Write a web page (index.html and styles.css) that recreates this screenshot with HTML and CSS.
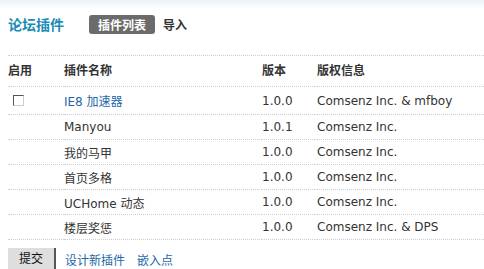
FILE: index.html
```html
<!DOCTYPE html>
<html>
<head>
<meta charset="utf-8">
<link rel="stylesheet" href="styles.css">
</head>
<body>
<div class="topbar"></div>
<div class="page">
  <div class="head">
    <h3 class="title">论坛插件</h3>
    <span class="tab active">插件列表</span>
    <span class="tab">导入</span>
  </div>
  <table class="grid">
    <thead>
      <tr><th class="c1">启用</th><th class="c2">插件名称</th><th class="c3">版本</th><th class="c4">版权信息</th></tr>
    </thead>
    <tbody>
      <tr class="first"><td class="c1"><span class="chk"></span></td><td class="c2"><a class="link">IE8 加速器</a></td><td class="c3">1.0.0</td><td class="c4">Comsenz Inc. &amp; mfboy</td></tr>
      <tr><td class="c1"></td><td class="c2">Manyou</td><td class="c3">1.0.1</td><td class="c4">Comsenz Inc.</td></tr>
      <tr><td class="c1"></td><td class="c2">我的马甲</td><td class="c3">1.0.0</td><td class="c4">Comsenz Inc.</td></tr>
      <tr><td class="c1"></td><td class="c2">首页多格</td><td class="c3">1.0.0</td><td class="c4">Comsenz Inc.</td></tr>
      <tr><td class="c1"></td><td class="c2">UCHome 动态</td><td class="c3">1.0.0</td><td class="c4">Comsenz Inc.</td></tr>
      <tr><td class="c1"></td><td class="c2">楼层奖惩</td><td class="c3">1.0.0</td><td class="c4">Comsenz Inc. &amp; DPS</td></tr>
    </tbody>
  </table>
  <div class="foot">
    <span class="btn">提交</span>
    <a class="link">设计新插件</a>
    <a class="link">嵌入点</a>
  </div>
</div>
</body>
</html>
```

FILE: styles.css
```css
html, body {
  margin: 0;
  padding: 0;
  background: #fff;
}
body {
  font-family: "DejaVu Sans", Verdana, "Noto Sans CJK SC", sans-serif;
  font-size: 12px;
  color: #333;
  overflow: hidden;
}
.topbar {
  height: 9px;
  background: linear-gradient(#e9f2f5, #ffffff);
}
.page {
  padding-left: 8px;
}
.head {
  display: flex;
  align-items: center;
  height: 30px;
}
.title {
  margin: 0 25px 0 0;
  font-size: 14px;
  font-weight: bold;
  color: #1a8cb6;
  font-family: "Noto Sans CJK SC", sans-serif;
}
.tab {
  font-family: "Noto Sans CJK SC", sans-serif;
  font-weight: bold;
  font-size: 12px;
  color: #333;
  line-height: 19px;
  height: 19px;
  margin-right: 8px;
}
.tab.active {
  background: #6b6b6b;
  color: #fff;
  border-radius: 3px;
  padding: 0 9px;
}
.grid {
  margin-top: 16px;
  width: 476px;
  border-collapse: collapse;
}
.grid th, .grid td {
  text-align: left;
  padding: 0;
  border-bottom: 1px dotted #c9d0d3;
  white-space: nowrap;
}
.grid th {
  font-family: "Noto Sans CJK SC", sans-serif;
  font-weight: bold;
  color: #333;
  height: 27px;
  padding-bottom: 3px;
  border-top: 1px dotted #c9d0d3;
}
.grid td {
  height: 24px;
}
.grid tr.first td {
  height: 27px;
}
.c1 { width: 56px; }
.c2 { width: 198px; }
.c3 { width: 55px; }
.grid td.c2, .foot {
  font-family: "DejaVu Sans", "Noto Sans CJK SC", sans-serif;
}
.chk {
  display: block;
  width: 9px;
  height: 9px;
  margin-left: 5px;
  border-top: 1px solid #555;
  border-left: 1px solid #555;
  border-right: 1px solid #ccc;
  border-bottom: 1px solid #ccc;
  background: #fff;
}
.link {
  color: #2366a8;
  text-decoration: none;
}
.foot {
  display: flex;
  align-items: center;
  margin-top: 8px;
  gap: 14px;
}
.foot .link { margin-right: -2px; }
.btn {
  display: inline-block;
  width: 46px;
  height: 22px;
  line-height: 22px;
  text-align: center;
  background: #dedede;
  border-right: 2px solid #555;
  color: #111;
  margin-right: -5px;
}
```
